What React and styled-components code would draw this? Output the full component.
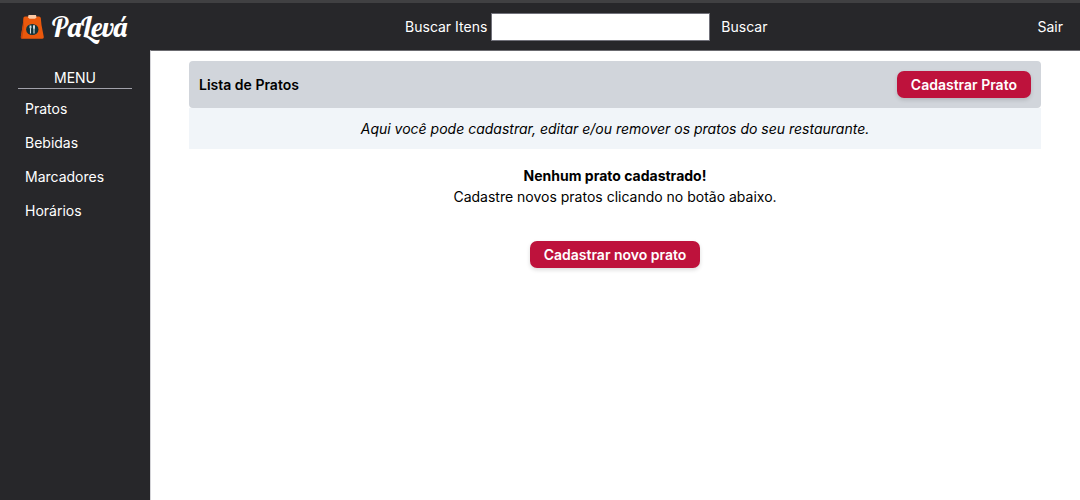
import React from "react";
import styled, { createGlobalStyle } from "styled-components";

const GlobalStyle = createGlobalStyle`
  *, *::before, *::after { box-sizing: border-box; }
  body {
    margin: 0;
    background: #ffffff;
    color: #000000;
    font-family: Inter, "Liberation Sans", sans-serif;
    font-size: 14px;
    line-height: 21px;
  }
  p, h1, h2, ul { margin: 0; padding: 0; }
`;

const Page = styled.div`
  display: flex;
  flex-direction: column;
  min-height: 100vh;
`;

const TopBar = styled.header`
  display: flex;
  justify-content: space-between;
  align-items: center;
  height: 50px;
  padding: 0 17px 0 20px;
  border-top: 3px solid #404042;
  background: #27272a;
  color: #ffffff;
`;

const Brand = styled.a`
  display: flex;
  align-items: center;
  gap: 8px;
  padding-right: 8px;
  color: #ffffff;
  text-decoration: none;
`;

const BrandName = styled.span`
  font-family: Lobster, "Liberation Serif", serif;
  font-size: 28px;
  line-height: 32px;
`;

const Search = styled.form`
  display: flex;
  align-items: center;
  gap: 4px;
`;

const SearchInput = styled.input`
  width: 219px;
  height: 28px;
  padding: 0 8px;
  border: 1px solid #71717a;
  background: #ffffff;
  font: inherit;
`;

const PlainButton = styled.button`
  padding: 0;
  border: 0;
  background: none;
  color: #ffffff;
  font: inherit;
  cursor: pointer;
`;

const SearchButton = styled(PlainButton)`
  margin-left: 7px;
`;

const Body = styled.div`
  display: flex;
  flex: 1;
`;

const Sidebar = styled.nav`
  flex: none;
  width: 150px;
  padding: 17px 18px;
  background: #27272a;
  color: #ffffff;
`;

const MenuTitle = styled.h2`
  border-bottom: 1px solid #a1a1aa;
  font-size: 14px;
  font-weight: 400;
  text-align: center;
`;

const MenuList = styled.ul`
  display: flex;
  flex-direction: column;
  gap: 13px;
  padding: 9px 7px;
  list-style: none;
`;

const MenuLink = styled.a`
  display: block;
  color: #ffffff;
  text-decoration: none;
`;

const Main = styled.main`
  flex: 1;
  padding: 10px 39px 10px 38px;
  border-top: 1px solid #6b6b70;
  border-left: 1px solid #d4d4d8;
`;

const PanelHeader = styled.div`
  display: flex;
  align-items: center;
  justify-content: space-between;
  padding: 10px;
  border-radius: 4px;
  background: #d1d5db;
`;

const PanelTitle = styled.h1`
  font-size: 14px;
  font-weight: 600;
`;

const PrimaryButton = styled.button`
  display: block;
  height: 27px;
  padding: 0 14px;
  border: 0;
  border-radius: 7px;
  background: #be123c;
  box-shadow: 0 2px 4px rgba(0, 0, 0, 0.14);
  color: #ffffff;
  font: inherit;
  font-weight: 600;
  cursor: pointer;
`;

const Hint = styled.p`
  padding: 10px;
  background: #f1f5f9;
  font-style: italic;
  text-align: center;
`;

const Empty = styled.section`
  display: flex;
  flex-direction: column;
  align-items: center;
  gap: 34px;
  padding-top: 16px;
  text-align: center;
`;

const EmptyTitle = styled.p`
  font-weight: 700;
`;

const menu = ["Pratos", "Bebidas", "Marcadores", "Horários"];

function BagIcon() {
  return (
    <svg width="24" height="26" viewBox="0 0 24 26" aria-hidden="true">
      <path d="M5 2.500h14q1.500 0 1.800 1.500L21.500 11 23.800 23q.2 1.800-1.500 1.800H2.200Q.6 24.800.8 23L2.800 11l.6-7Q3.500 2.500 5 2.500z" fill="#ea580c" />
      <path d="M3.400 4 2.800 11 .8 23q-.2 1.800 1.400 1.800L4 12z" fill="#c9470c" />
      <path d="M8.500 1h7.500l.5 2.500-1.500 1.300H9.500L8 3.500z" fill="#fdc9a5" />
      <ellipse cx="12.300" cy="15.500" rx="6.200" ry="5.500" fill="#12343b" />
      <path d="M10.500 11.500v8M14 11.500v8" stroke="#d5e2e5" strokeWidth="1.100" />
      <path d="M9.500 11.500v2.500h2v-2.500" fill="none" stroke="#8fa9ae" strokeWidth=".6" />
      <ellipse cx="14" cy="13" rx=".9" ry="2" fill="#e2e8f0" />
    </svg>
  );
}

export default function App() {
  return (
    <>
      <GlobalStyle />
      <Page>
        <TopBar>
          <Brand href="#">
            <BagIcon />
            <BrandName>PaLevá</BrandName>
          </Brand>
          <Search onSubmit={(event) => event.preventDefault()}>
            <label htmlFor="search">Buscar Itens</label>
            <SearchInput id="search" type="text" />
            <SearchButton type="submit">Buscar</SearchButton>
          </Search>
          <PlainButton type="button">Sair</PlainButton>
        </TopBar>
        <Body>
          <Sidebar>
            <MenuTitle>MENU</MenuTitle>
            <MenuList>
              {menu.map((item) => (
                <li key={item}>
                  <MenuLink href="#">{item}</MenuLink>
                </li>
              ))}
            </MenuList>
          </Sidebar>
          <Main>
            <PanelHeader>
              <PanelTitle>Lista de Pratos</PanelTitle>
              <PrimaryButton type="button">Cadastrar Prato</PrimaryButton>
            </PanelHeader>
            <Hint>Aqui você pode cadastrar, editar e/ou remover os pratos do seu restaurante.</Hint>
            <Empty>
              <div>
                <EmptyTitle>Nenhum prato cadastrado!</EmptyTitle>
                <p>Cadastre novos pratos clicando no botão abaixo.</p>
              </div>
              <PrimaryButton type="button">Cadastrar novo prato</PrimaryButton>
            </Empty>
          </Main>
        </Body>
      </Page>
    </>
  );
}
